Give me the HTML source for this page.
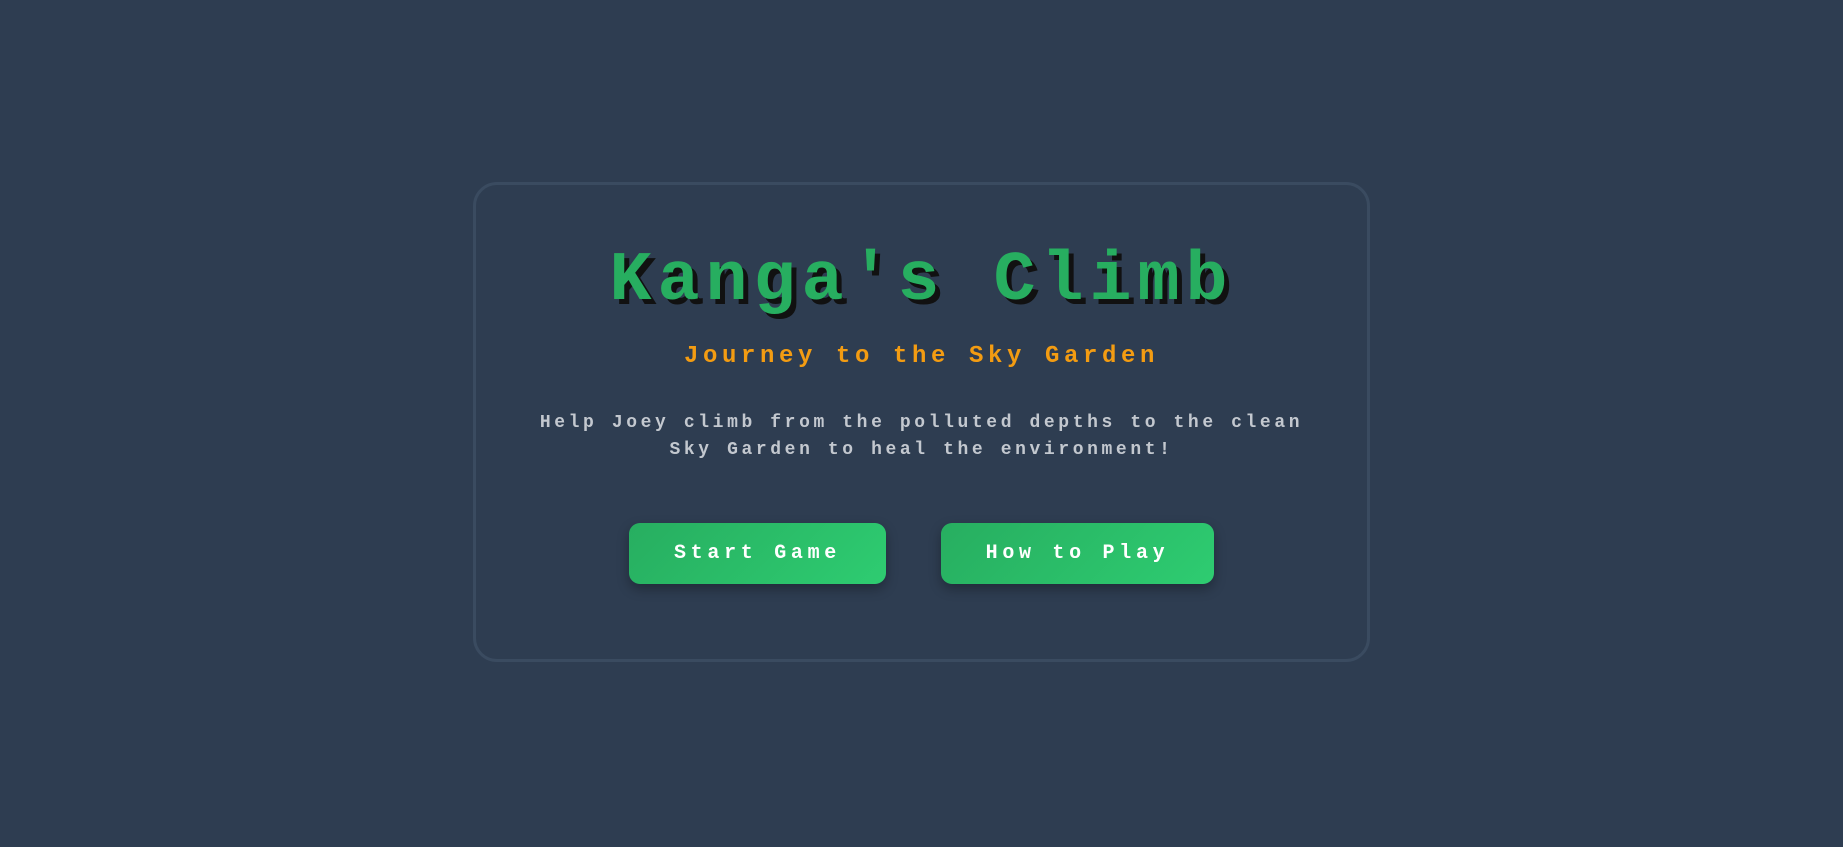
<!DOCTYPE html>
<html><head><style>
html,body{margin:0;padding:0;width:1843px;height:847px;background:#2e3d51;overflow:hidden;font-family:"Liberation Mono",monospace;}
.card{position:absolute;left:473px;top:182px;width:891px;height:474px;border:3px solid #3a4b60;border-radius:24px;}
.t{position:absolute;left:0;width:100%;text-align:center;white-space:nowrap;}
h1{margin:0;position:absolute;left:0;top:57px;width:100%;text-align:center;font-size:70px;font-weight:bold;color:#27ae60;letter-spacing:6px;text-shadow:5px 5px 0 #111;line-height:80px;}
.sub{top:157px;font-size:24px;font-weight:bold;color:#f39c12;letter-spacing:4.6px;line-height:30px;}
.desc{top:225px;font-size:18px;font-weight:bold;color:#c3c8cf;letter-spacing:3.6px;line-height:27px;}
.btn{position:absolute;top:338px;height:61px;border-radius:11px;background:linear-gradient(135deg,#27ae60,#2ecc71);color:#fff;font-size:20px;font-weight:bold;letter-spacing:4.7px;line-height:61px;text-align:center;box-shadow:0 5px 12px rgba(0,0,0,.3);}
</style></head><body>
<div class="card">
<h1>Kanga's Climb</h1>
<div class="t sub">Journey to the Sky Garden</div>
<div class="t desc">Help Joey climb from the polluted depths to the clean<br>Sky Garden to heal the environment!</div>
<div class="btn" style="left:153px;width:257px">Start Game</div>
<div class="btn" style="left:465px;width:273px">How to Play</div>
</div>
</body></html>
